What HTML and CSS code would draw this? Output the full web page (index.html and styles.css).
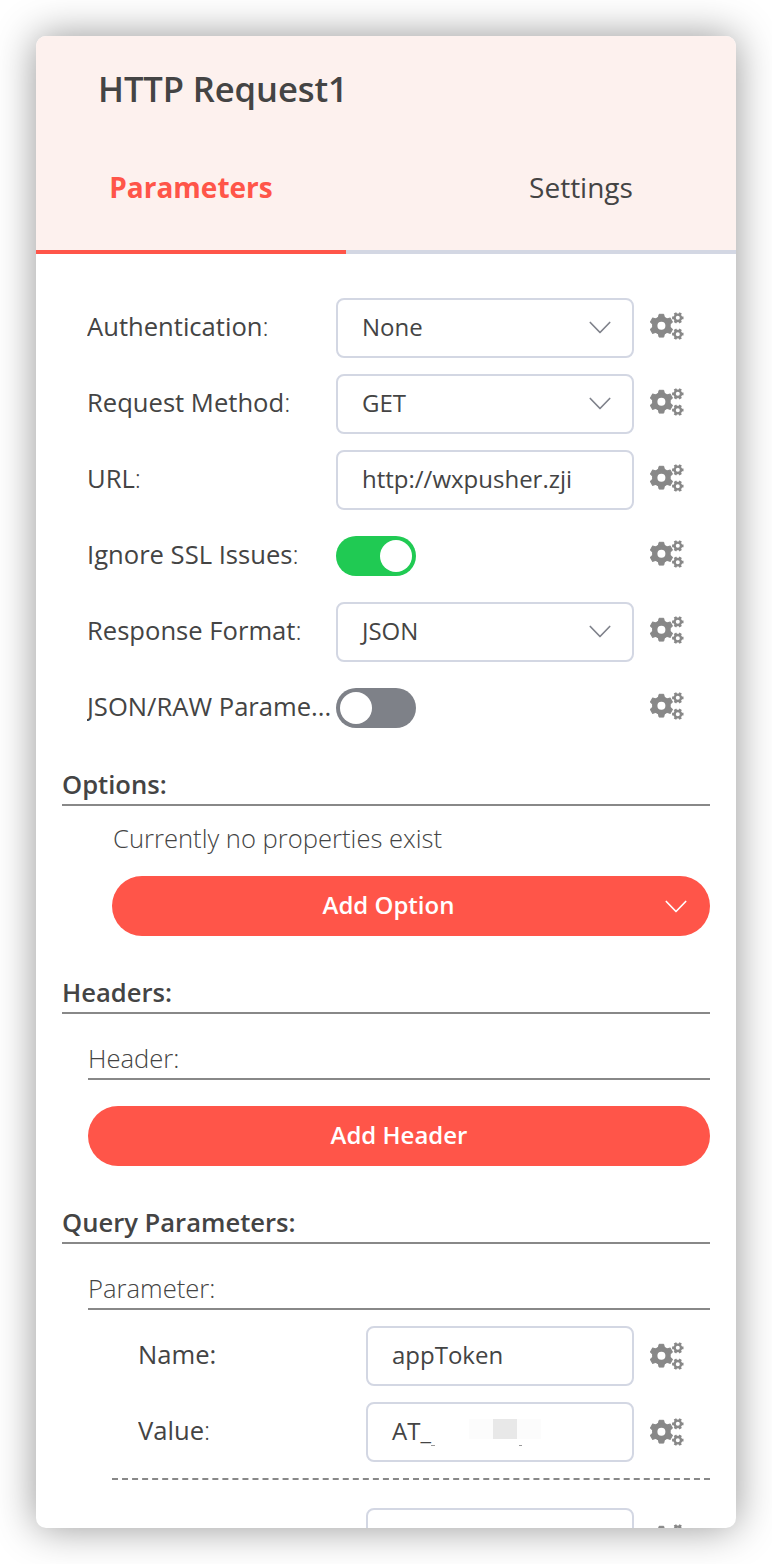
FILE: index.html
```html
<!DOCTYPE html>
<html lang="en">
<head>
    <meta charset="UTF-8">
    <title>HTTP Request1</title>
    <meta name="viewport" content="width=device-width, initial-scale=1.0">
    <link rel="stylesheet" href="styles.css">
</head>
<body>
    <svg class="sprite" width="0" height="0">
        <defs>
            <path id="big-teeth" d="M9.1 2.3h4.6l.9 4h-6.4zM8.2 21.1h6.4l-.9 4h-4.6z" stroke="#888" stroke-width="1" stroke-linejoin="round"/>
            <path id="small-teeth" d="M22.1 4.4h2.6v2.8h-2.6zM30.9 4.4h2.6v2.8h-2.6z"/>
            <g id="small-cog">
                <circle cx="27.8" cy="5.8" r="3.2" fill="none" stroke="#888" stroke-width="2.4"/>
                <use href="#small-teeth"/>
                <use href="#small-teeth" transform="rotate(60 27.8 5.8)"/>
                <use href="#small-teeth" transform="rotate(120 27.8 5.8)"/>
            </g>
        </defs>
        <symbol id="cogs" viewBox="0 0 34 28">
            <circle cx="11.4" cy="13.7" r="6.7" fill="none" stroke="#888" stroke-width="5.4"/>
            <use href="#big-teeth"/>
            <use href="#big-teeth" transform="rotate(60 11.4 13.7)"/>
            <use href="#big-teeth" transform="rotate(120 11.4 13.7)"/>
            <use href="#small-cog"/>
            <use href="#small-cog" y="16.4"/>
        </symbol>
        <symbol id="chevron" viewBox="0 0 22 14">
            <path d="M1.3 1.5L11 11.5L20.7 1.5" fill="none" stroke="currentColor" stroke-width="1.7" stroke-linecap="round" stroke-linejoin="round"/>
        </symbol>
    </svg>
    <div class="panel">
        <div class="header">
            <div class="title">HTTP Request1</div>
            <div class="tabs">
                <div class="tab active">Parameters</div>
                <div class="tab">Settings</div>
            </div>
        </div>
        <div class="params">
            <div class="row">
                <div class="label">Authentication<span>:</span></div>
                <div class="field"><div class="input">None<svg class="chevron"><use href="#chevron"/></svg></div></div>
                <svg class="cogs"><use href="#cogs"/></svg>
            </div>
            <div class="row">
                <div class="label">Request Method<span>:</span></div>
                <div class="field"><div class="input">GET<svg class="chevron"><use href="#chevron"/></svg></div></div>
                <svg class="cogs"><use href="#cogs"/></svg>
            </div>
            <div class="row">
                <div class="label">URL<span>:</span></div>
                <div class="field"><div class="input">http://wxpusher.zji</div></div>
                <svg class="cogs"><use href="#cogs"/></svg>
            </div>
            <div class="row">
                <div class="label">Ignore SSL Issues<span>:</span></div>
                <div class="field"><div class="switch on"></div></div>
                <svg class="cogs"><use href="#cogs"/></svg>
            </div>
            <div class="row">
                <div class="label">Response Format<span>:</span></div>
                <div class="field"><div class="input">JSON<svg class="chevron"><use href="#chevron"/></svg></div></div>
                <svg class="cogs"><use href="#cogs"/></svg>
            </div>
            <div class="row">
                <div class="label">JSON/RAW Parame...</div>
                <div class="field"><div class="switch"></div></div>
                <svg class="cogs"><use href="#cogs"/></svg>
            </div>
        </div>

        <div class="section options">
            <div class="section-title">Options:</div>
            <div class="empty">Currently no properties exist</div>
            <div class="btn btn-select"><span>Add Option</span><svg class="chevron"><use href="#chevron"/></svg></div>
        </div>

        <div class="section headers">
            <div class="section-title">Headers:</div>
            <div class="sub-title">Header:</div>
            <div class="btn">Add Header</div>
        </div>

        <div class="section query">
            <div class="section-title">Query Parameters:</div>
            <div class="sub-title">Parameter:</div>
            <div class="pair">
                <div class="row">
                    <div class="label">Name:</div>
                    <div class="field"><div class="input">appToken</div></div>
                    <svg class="cogs"><use href="#cogs"/></svg>
                </div>
                <div class="row">
                    <div class="label">Value<span>:</span></div>
                    <div class="field">
                        <div class="input">AT_
                            <div class="mask"><i></i><i></i><i></i></div>
                        </div>
                    </div>
                    <svg class="cogs"><use href="#cogs"/></svg>
                </div>
            </div>
            <div class="pair">
                <div class="row">
                    <div class="label"></div>
                    <div class="field"><div class="input">uid</div></div>
                    <svg class="cogs"><use href="#cogs"/></svg>
                </div>
            </div>
        </div>
    </div>
</body>
</html>
```
FILE: styles.css
```css
* {
    box-sizing: border-box;
}
body {
    margin: 0;
    padding: 36px;
    height: 1564px;
    overflow: hidden;
    background: #fff;
    color: #444;
    font-family: 'Open Sans', sans-serif;
    font-size: 25.6px;
}
.sprite {
    position: absolute;
}
.panel {
    width: 700px;
    height: 1492px;
    border-radius: 10px;
    background: #fff;
    overflow: hidden;
    box-shadow: 0 0 40px rgba(0,0,0,0.42);
}
.header {
    height: 218px;
    background: #fdf1ee;
}
.title {
    height: 108px;
    padding-left: 62px;
    line-height: 106px;
    font-size: 34.6px;
    font-weight: 600;
    letter-spacing: -0.1px;
}
.tabs {
    display: flex;
    height: 110px;
}
.tab {
    width: 390px;
    padding: 21px 0 0 80px;
    line-height: 44px;
    font-size: 28px;
    text-align: center;
    border-bottom: 4px solid #d3d7e3;
}
.tab.active {
    width: 310px;
    padding-left: 0;
    color: #ff5549;
    font-weight: 700;
    border-color: #ff5549;
}
.params {
    padding: 44px 52px 0 51px;
}
.row {
    display: flex;
    align-items: center;
    height: 60px;
    margin-bottom: 16px;
}
.label {
    width: 249px;
    line-height: 60px;
    margin-top: -2px;
    white-space: nowrap;
    overflow: hidden;
}
.label span {
    font-weight: 300;
}
.field {
    flex: 1;
    margin-right: 16px;
}
.input {
    position: relative;
    display: flex;
    align-items: center;
    height: 60px;
    padding: 0 21px 4px 24px;
    border: 2px solid #d3d7e3;
    border-radius: 8px;
    font-size: 24px;
}
.chevron {
    width: 22px;
    height: 14px;
    margin-left: auto;
    color: #7f828b;
}
.input .chevron {
    margin-top: 4px;
}
.cogs {
    width: 34px;
    height: 28px;
    margin-top: -4px;
    fill: #888;
}
.switch {
    width: 80px;
    height: 40px;
    padding: 4px;
    border-radius: 20px;
    background: #7e8188;
}
.switch::after {
    content: "";
    display: block;
    width: 32px;
    height: 32px;
    border-radius: 50%;
    background: #fff;
}
.switch.on {
    background: #20ca53;
}
.switch.on::after {
    margin-left: auto;
}
.section {
    padding: 0 26px;
}
.section-title {
    height: 44px;
    line-height: 46px;
    font-weight: 600;
    border-bottom: 2px solid #888;
}
.options {
    margin-top: 24px;
}
.empty {
    height: 70px;
    padding-left: 51px;
    line-height: 65px;
    font-weight: 300;
}
.btn {
    height: 60px;
    margin-left: 26px;
    border-radius: 30px;
    background: #ff5549;
    color: #fff;
    font-size: 24px;
    font-weight: 600;
    line-height: 58px;
    text-align: center;
}
.btn-select {
    display: flex;
    align-items: center;
    margin-left: 50px;
    padding: 0 23px 2px 0;
}
.btn-select span {
    flex: 1;
    text-align: center;
}
.btn-select .chevron {
    margin-top: 3px;
    color: #fff;
}
.headers,
.query {
    margin-top: 34px;
}
.sub-title {
    height: 66px;
    margin-left: 26px;
    padding-top: 22px;
    line-height: 46px;
    font-weight: 300;
    border-bottom: 2px solid #888;
}
.headers .btn {
    margin-top: 26px;
}
.pair {
    margin-left: 50px;
    padding: 16px 26px 0;
}
.pair + .pair {
    border-top: 2px dashed #888;
    padding-top: 28px;
}
.pair .label {
    width: 228px;
}
.pair .cogs {
    margin-top: 0;
}
/* blurred out part of the token */
.mask {
    position: absolute;
    left: 101px;
    top: 15px;
    display: flex;
}
.mask i {
    width: 24px;
    height: 20px;
    background: #fcfcfc;
}
.mask i:nth-child(2) {
    background: #e8e8e8;
}
.mask::before,
.mask::after {
    content: "";
    position: absolute;
    left: -38px;
    top: 26px;
    width: 4px;
    height: 1px;
    background: #999;
}
.mask::after {
    left: 50px;
    width: 3px;
}
```
